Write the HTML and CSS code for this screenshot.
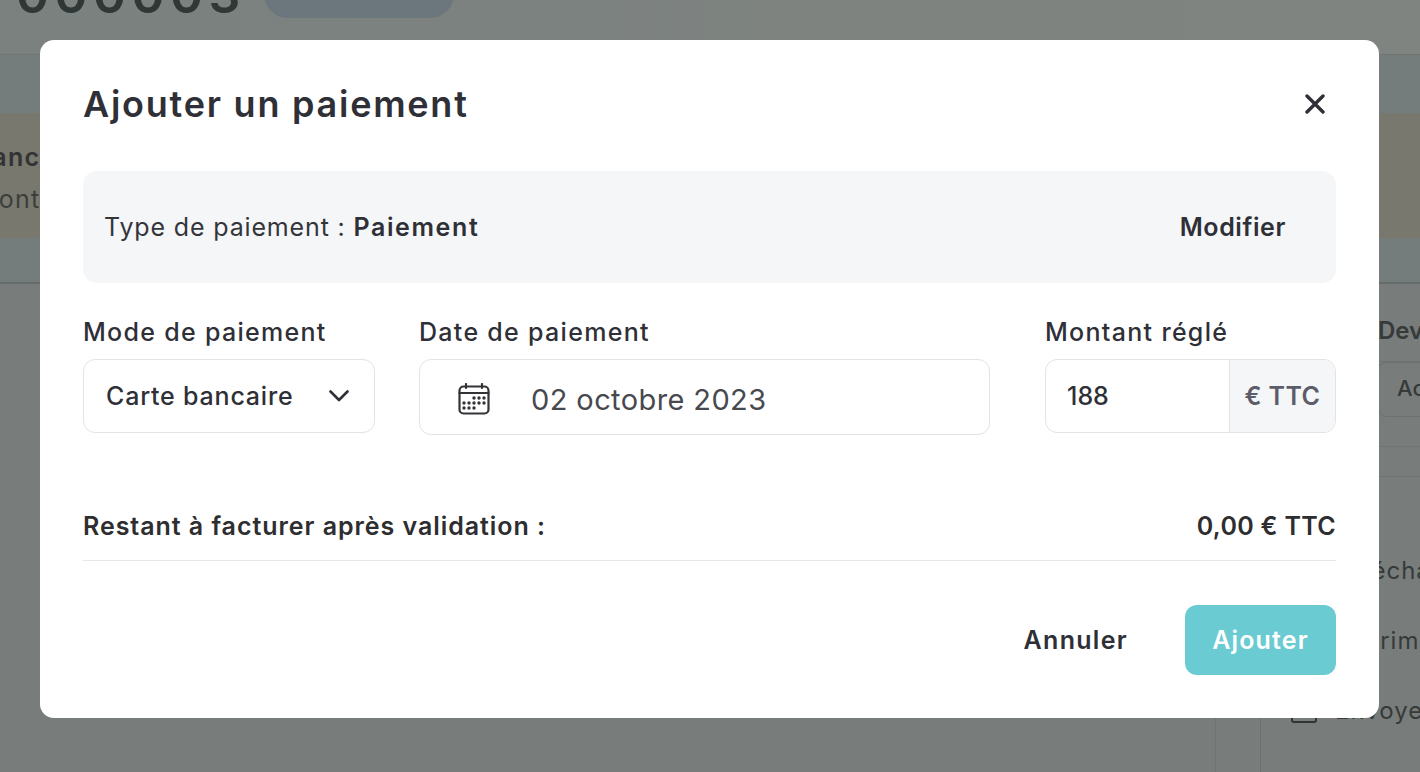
FILE: index.html
```html
<!DOCTYPE html>
<html lang="fr">
<head>
<meta charset="utf-8">
<title>Ajouter un paiement</title>
<link rel="stylesheet" href="styles.css">
</head>
<body>
<div class="page">
  <header class="page-head">
    <span class="doc-number">000003</span>
    <span class="status-pill"></span>
  </header>
  <div class="band-top"></div>
  <section class="banner">
    <strong class="banner-title">Avance</strong>
    <span class="banner-text">Montant</span>
  </section>
  <div class="tabs"></div>
  <div class="content">
    <div class="main-col"></div>
    <div class="mid-col"></div>
    <aside class="side-col">
      <div class="side-title">Devis</div>
      <div class="side-action"><span class="side-btn">Actions</span></div>
      <div class="side-gap"></div>
      <ul class="side-list">
        <li>Télécharger</li>
        <li>Imprimer</li>
        <li class="with-icon"><span class="mail-icon"></span>Envoyer</li>
      </ul>
    </aside>
  </div>
</div>

<div class="modal" role="dialog" aria-label="Ajouter un paiement">
  <div class="modal-head">
    <h1 class="modal-title">Ajouter un paiement</h1>
    <svg class="close-icon" viewBox="0 0 20 20" width="20" height="20" aria-hidden="true">
      <path d="M2 2 18 18M18 2 2 18" fill="none" stroke="#2f3037" stroke-width="3.400" stroke-linecap="round"/>
    </svg>
  </div>

  <div class="type-box">
    <span class="type-label">Type de paiement : <strong>Paiement</strong></span>
    <span class="type-edit">Modifier</span>
  </div>

  <div class="fields">
    <div class="field field-mode">
      <label class="field-label">Mode de paiement</label>
      <div class="control select">
        <span>Carte bancaire</span>
        <svg viewBox="0 0 20 12" width="20" height="12" aria-hidden="true">
          <path d="M1.500 1.500 10 10 18.500 1.500" fill="none" stroke="#2f3037" stroke-width="2.600" stroke-linecap="round" stroke-linejoin="round"/>
        </svg>
      </div>
    </div>
    <div class="field field-date">
      <label class="field-label">Date de paiement</label>
      <div class="control date">
        <svg viewBox="0 0 32 32" width="32" height="32" aria-hidden="true">
          <rect x="1.500" y="3.500" width="29" height="27" rx="4" fill="none" stroke="#333438" stroke-width="2.200"/>
          <path d="M1.500 10h29M8 1v4M24 1v4" fill="none" stroke="#333438" stroke-width="2.200" stroke-linecap="round"/>
          <g fill="#333438">
            <circle cx="16" cy="15" r="1.700"/><circle cx="21" cy="15" r="1.700"/><circle cx="26" cy="15" r="1.700"/>
            <circle cx="6" cy="20" r="1.700"/><circle cx="11" cy="20" r="1.700"/><circle cx="16" cy="20" r="1.700"/><circle cx="21" cy="20" r="1.700"/><circle cx="26" cy="20" r="1.700"/>
            <circle cx="6" cy="25" r="1.700"/><circle cx="11" cy="25" r="1.700"/><circle cx="16" cy="25" r="1.700"/>
          </g>
        </svg>
        <span>02 octobre 2023</span>
      </div>
    </div>
    <div class="field field-amount">
      <label class="field-label">Montant réglé</label>
      <div class="control amount">
        <span class="amount-value">188</span>
        <span class="amount-unit">€ TTC</span>
      </div>
    </div>
  </div>

  <div class="remaining">
    <span class="remaining-label">Restant à facturer après validation :</span>
    <span class="remaining-value">0,00 € TTC</span>
  </div>

  <div class="actions">
    <span class="btn-cancel">Annuler</span>
    <span class="btn-add">Ajouter</span>
  </div>
</div>
</body>
</html>
```
FILE: styles.css
```css
* { box-sizing: border-box; }
html, body { margin: 0; height: 100%; }
body {
  position: relative;
  width: 1420px;
  height: 772px;
  overflow: hidden;
  background: #787d7c;
  font-family: Inter, "Liberation Sans", sans-serif;
  color: #2f3037;
}
.page { height: 772px; display: flex; flex-direction: column; }
.page-head {
  height: 55px;
  flex: none;
  display: flex;
  align-items: flex-end;
  gap: 18px;
  padding: 0 0 36px 16px;
  background: linear-gradient(90deg, #7b817f, #7f8480);
  border-bottom: 1px solid #707674;
}
.doc-number { font-size: 50px; line-height: 50px; font-weight: 600; color: #2f3836; letter-spacing: 5.500px; margin-bottom: -2px; }
.status-pill { width: 190px; height: 60px; border-radius: 24px; background: #6b767d; }
.band-top { height: 58px; flex: none; background: #757c7c; }
.banner {
  height: 125px;
  flex: none;
  background: #78786f;
  display: flex;
  flex-direction: column;
  align-items: flex-start;
  padding: 28px 0 0 0;
  margin-left: -41px;
  font-size: 25px;
  letter-spacing: 1.200px;
  color: #333;
}
.banner-title { font-weight: 600; line-height: 32px; }
.banner-text { line-height: 32px; margin-top: 10px; margin-left: 16px; color: #3c3e3c; }
.tabs { height: 46px; flex: none; background: #757c7c; border-bottom: 2px solid #656a6a; }
.content { flex: 1; display: flex; background: #787d7c; }
.main-col { width: 1216px; border-right: 1px solid #6f7473; }
.mid-col { width: 45px; border-right: 1px solid #6d7271; }
.side-col { flex: 1; min-width: 0; padding-top: 32px; font-size: 24px; color: #363a39; white-space: nowrap; }
.side-title { padding-left: 117px; line-height: 30px; font-weight: 600; height: 46px; border-bottom: 1px solid #6f7473; }
.side-action { height: 85px; padding-left: 117px; border-bottom: 1px solid #6f7473; }
.side-btn { display: block; height: 55px; border: 1px solid #6d7271; border-right: 0; border-radius: 8px 0 0 8px; padding: 12px 0 0 18px; font-size: 22px; font-weight: 500; }
.side-gap { height: 30px; border-bottom: 1px solid #6f7473; }
.side-list { list-style: none; margin: 0; padding: 76px 0 0 30px; letter-spacing: 1px; }
.side-list li { height: 70px; line-height: 36px; padding-left: 44px; }
.side-list .with-icon { position: relative; }
.mail-icon { position: absolute; left: 0; top: 8px; width: 26px; height: 22px; border: 2px solid #333; border-radius: 3px; }

.modal {
  position: absolute;
  left: 40px;
  top: 40px;
  width: 1339px;
  height: 678px;
  padding: 0 43px;
  background: #fff;
  border-radius: 14px;
  display: flex;
  flex-direction: column;
}
.modal-head { height: 131px; flex: none; display: flex; align-items: center; justify-content: space-between; padding: 0 11px 3px 0; }
.modal-title { margin: 0; font-size: 36px; line-height: 44px; font-weight: 600; letter-spacing: 1.750px; color: #2f3037; }
.close-icon { display: block; }
.type-box {
  height: 112px;
  flex: none;
  display: flex;
  align-items: center;
  justify-content: space-between;
  padding: 0 50px 0 21px;
  background: #f5f6f8;
  border-radius: 14px;
  font-size: 25px;
  color: #34353b;
}
.type-label { font-weight: 400; letter-spacing: .85px; }
.type-label strong { font-weight: 600; letter-spacing: 1.600px; color: #2f3037; }
.type-edit { font-weight: 600; letter-spacing: .6px; color: #2f3037; }
.fields { display: flex; margin-top: 32px; height: 152px; flex: none; }
.field { display: flex; flex-direction: column; }
.field-mode { width: 292px; margin-right: 44px; }
.field-date { width: 571px; margin-right: 55px; }
.field-amount { width: 291px; }
.field-label { height: 44px; line-height: 34px; font-size: 25px; font-weight: 500; letter-spacing: 1.300px; color: #2f3037; }
.control {
  height: 74px;
  display: flex;
  align-items: center;
  border: 1px solid #e2e3e6;
  border-radius: 12px;
  font-size: 25px;
  font-weight: 500;
  color: #2f3037;
}
.select { justify-content: space-between; padding: 0 25px 0 22px; letter-spacing: .8px; }
.date { height: 76px; gap: 41px; padding: 4px 0 0 38px; font-size: 29px; font-weight: 400; letter-spacing: .4px; color: #48494e; }
.amount { overflow: hidden; }
.amount-value { flex: 1; padding-left: 21px; }
.amount-unit {
  width: 106px;
  height: 100%;
  display: flex;
  align-items: center;
  justify-content: center;
  background: #f5f6f8;
  border-left: 1px solid #e2e3e6;
  font-weight: 600;
  letter-spacing: .4px;
  color: #5c5d68;
}
.remaining {
  height: 51px;
  margin-top: 43px;
  flex: none;
  display: flex;
  justify-content: space-between;
  align-items: flex-start;
  border-bottom: 1px solid #e6e7ea;
  font-size: 25px;
  line-height: 32px;
  font-weight: 600;
  color: #2e2e30;
}
.remaining-label { letter-spacing: .95px; }
.remaining-value { letter-spacing: .3px; }
.actions { flex: none; display: flex; justify-content: flex-end; align-items: center; margin-top: 44px; gap: 57px; }
.btn-cancel { font-size: 25px; font-weight: 600; letter-spacing: 1.300px; color: #2f3037; }
.btn-add {
  width: 151px;
  height: 70px;
  display: flex;
  align-items: center;
  justify-content: center;
  border-radius: 12px;
  background: #6bcbd2;
  color: #fff;
  font-size: 25px;
  font-weight: 600;
  letter-spacing: 1.150px;
}
```
